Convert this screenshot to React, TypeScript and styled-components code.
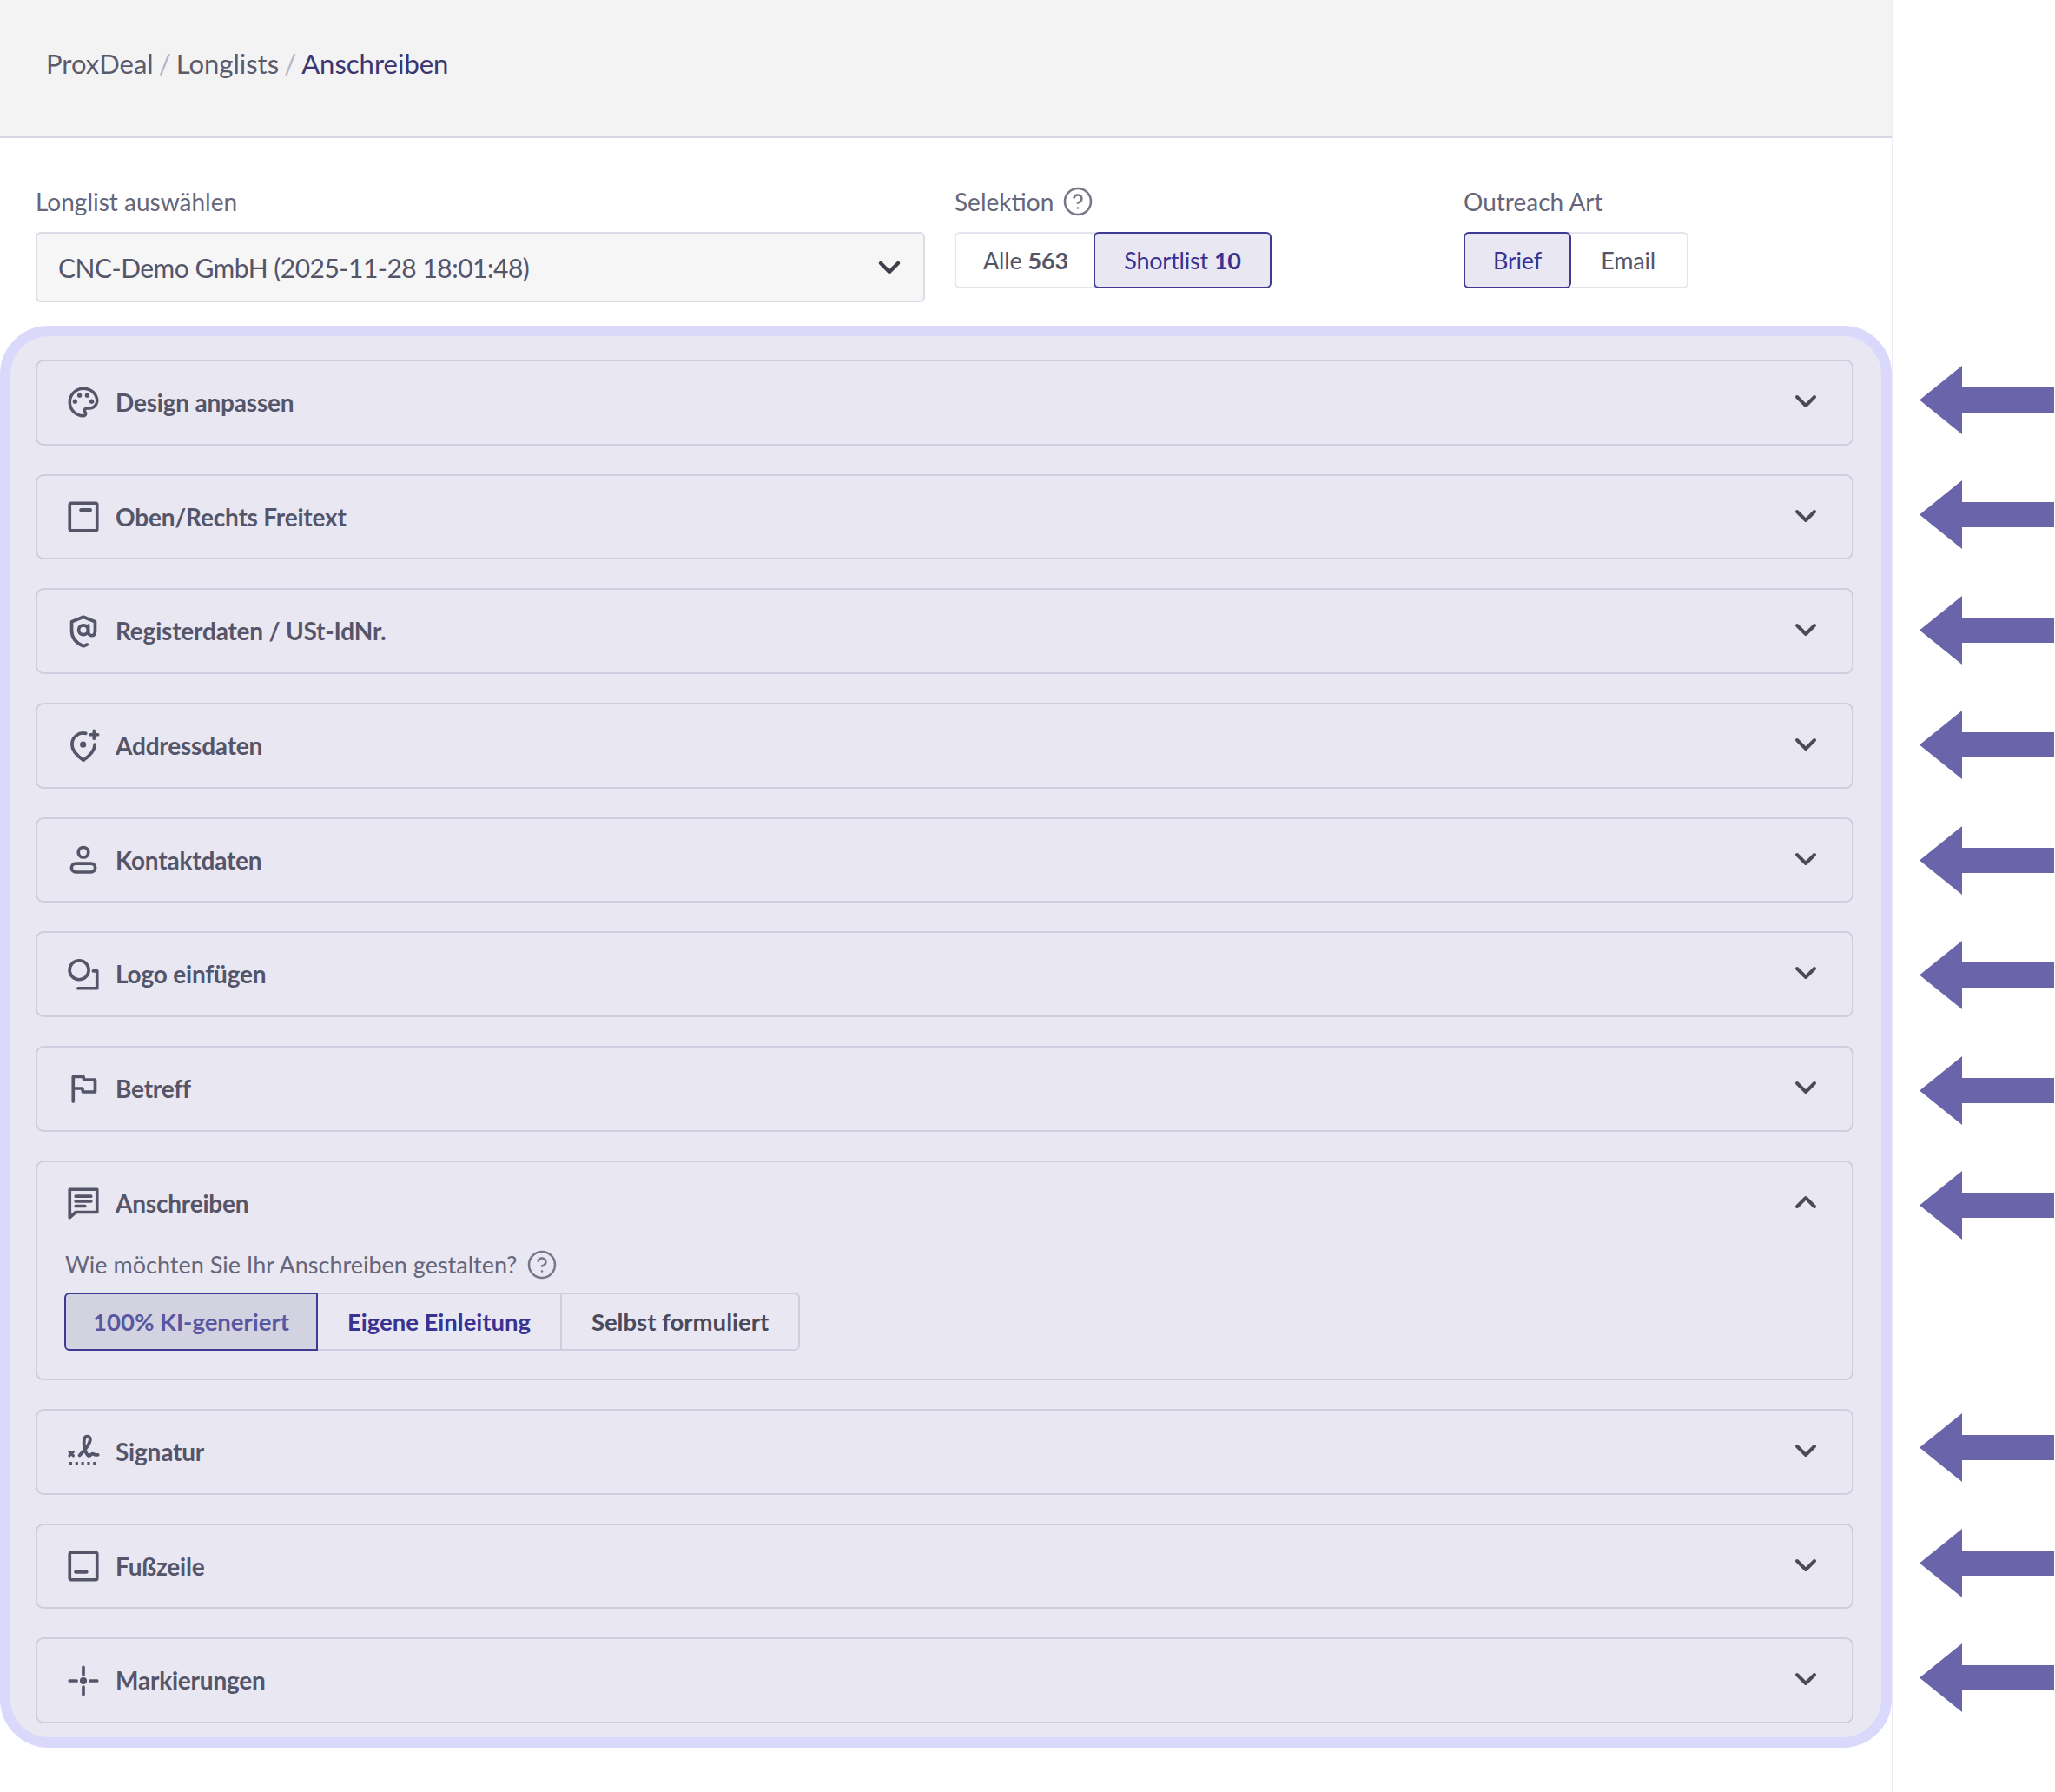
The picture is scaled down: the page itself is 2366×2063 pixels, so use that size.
import React from 'react'
import styled, { createGlobalStyle } from 'styled-components'
import { ChevronDown, ChevronUp, CircleHelp } from 'lucide-react'
import { MdOutlinePalette } from 'react-icons/md'

const GlobalStyle = createGlobalStyle`
  html, body {
    margin: 0;
    padding: 0;
    background: #fff;
  }
  body {
    font-family: 'Lato', 'Noto Sans', sans-serif;
    color: #55556a;
  }
  * {
    box-sizing: border-box;
  }
`

const Svg = ({ children }: { children: React.ReactNode }): JSX.Element => (
  <StyledSvg viewBox="0 0 24 24" fill="none" stroke="currentColor" strokeWidth="2.1" strokeLinecap="round" strokeLinejoin="round">
    {children}
  </StyledSvg>
)

const TopBoxIcon = () => (
  <Svg>
    <rect x="3" y="3" width="18" height="18" rx="1" />
    <path d="M10.5 7.5h6" strokeWidth="2.4" />
  </Svg>
)

const BottomBoxIcon = () => (
  <Svg>
    <rect x="3" y="3" width="18" height="18" rx="1" />
    <path d="M7 15.8h7" strokeWidth="2.4" />
  </Svg>
)

const ShieldAtIcon = () => (
  <Svg>
    <path d="M14.5 20.6 12 21.6C7.5 19.6 4.3 16 4.3 11.5V5.6L12 2.4l7.7 3.2v5.9" />
    <circle cx="12" cy="11" r="3.1" />
    <path d="M19.7 11.5c0 2-.9 3.2-2.3 3.2-1.2 0-2.2-1-2.2-2.4V8" />
  </Svg>
)

const PinPlusIcon = () => (
  <Svg>
    <path d="M13.6 4.2A7.4 7.4 0 0 0 4.5 11.5C4.5 15.4 8 19 12 21.8c4-2.8 7.5-6.4 7.5-10.3" />
    <circle cx="11.8" cy="11.5" r="1" fill="currentColor" />
    <path d="M19 2.5v5M16.5 5h5" />
  </Svg>
)

const PersonIcon = () => (
  <Svg>
    <circle cx="12" cy="7" r="3.3" />
    <rect x="4.2" y="14.4" width="15.6" height="5.6" rx="2.8" />
  </Svg>
)

const LogoIcon = () => (
  <Svg>
    <circle cx="9.2" cy="9" r="6.3" />
    <path d="M18.5 9.6H21V21H8.5" />
  </Svg>
)

const FlagIcon = () => (
  <Svg>
    <path d="M5.3 20.5V4.3H12l.4 2h7.3v8h-8l-.4-2.3H5.3" />
  </Svg>
)

const MessageIcon = () => (
  <Svg>
    <path d="M3 3h18v15H7l-4 3.5z" />
    <path d="M7 7.5h10M7 10.8h10M7 14h6" />
  </Svg>
)

const SignatureIcon = () => (
  <Svg>
    <path d="M2.8 12.2l2.6 2.6M5.4 12.2l-2.6 2.6" strokeWidth="1.8" />
    <path d="M9.5 14.5c3-3 7-7.5 7-10.5 0-2.5-3.5-2.5-4 0-.5 3 .5 9 2.5 10.5 1.3 1 2-1 3-1s1.5 1 3.5.7" strokeWidth="2.2" />
    <path d="M2.8 19.8h18.4" strokeDasharray="1.8 2.1" strokeLinecap="butt" strokeWidth="1.8" />
  </Svg>
)

const MarksIcon = () => (
  <Svg>
    <circle cx="12" cy="12" r="1.3" fill="currentColor" />
    <path d="M12 3v5M12 16v5M3 12h4.500M16.500 12H21" />
  </Svg>
)

function PaletteIcon(): JSX.Element {
  return <PaletteGlyph />
}

interface Section {
  title: string
  icon: JSX.Element
  open?: boolean
}

const sections: Section[] = [
  { title: 'Design anpassen', icon: <PaletteIcon /> },
  { title: 'Oben/Rechts Freitext', icon: <TopBoxIcon /> },
  { title: 'Registerdaten / USt-IdNr.', icon: <ShieldAtIcon /> },
  { title: 'Addressdaten', icon: <PinPlusIcon /> },
  { title: 'Kontaktdaten', icon: <PersonIcon /> },
  { title: 'Logo einfügen', icon: <LogoIcon /> },
  { title: 'Betreff', icon: <FlagIcon /> },
  { title: 'Anschreiben', icon: <MessageIcon />, open: true },
  { title: 'Signatur', icon: <SignatureIcon /> },
  { title: 'Fußzeile', icon: <BottomBoxIcon /> },
  { title: 'Markierungen', icon: <MarksIcon /> },
]

const App = (): JSX.Element => {
  return (
    <>
      <GlobalStyle />
      <Page>
        <Main>
          <Header>
            <Crumb>ProxDeal</Crumb>
            <Slash>/</Slash>
            <Crumb>Longlists</Crumb>
            <Slash>/</Slash>
            <Crumb $current>Anschreiben</Crumb>
          </Header>

          <Controls>
            <Field>
              <Label>Longlist auswählen</Label>
              <Select>
                CNC-Demo GmbH (2025-11-28 18:01:48)
                <ChevronDown size={40} strokeWidth={2.6} color="#3f3f4d" />
              </Select>
            </Field>
            <Field>
              <Label>
                Selektion
                <CircleHelp size={36} strokeWidth={1.7} color="#77778a" />
              </Label>
              <Segments>
                <Segment $width={160}>
                  Alle <b>563</b>
                </Segment>
                <Segment $width={205} $active>
                  Shortlist <b>10</b>
                </Segment>
              </Segments>
            </Field>
            <Field>
              <Label>Outreach Art</Label>
              <Segments>
                <Segment $width={124} $active>
                  Brief
                </Segment>
                <Segment $width={135}>Email</Segment>
              </Segments>
            </Field>
          </Controls>

          <Panel>
            {sections.map((section) => (
              <Card key={section.title}>
                <CardHeader>
                  {section.icon}
                  <CardTitle>{section.title}</CardTitle>
                  <CardChevron>
                    {section.open ? (
                      <ChevronUp size={40} strokeWidth={2.4} color="#4a4a58" />
                    ) : (
                      <ChevronDown size={40} strokeWidth={2.4} color="#4a4a58" />
                    )}
                  </CardChevron>
                </CardHeader>
                {section.open && (
                  <CardBody>
                    <Question>
                      Wie möchten Sie Ihr Anschreiben gestalten?
                      <CircleHelp size={36} strokeWidth={1.7} color="#77778a" />
                    </Question>
                    <ModeSegments>
                      <ModeButton $mode="selected" $width={292}>
                        100% KI-generiert
                      </ModeButton>
                      <ModeButton $mode="accent" $width={279}>
                        Eigene Einleitung
                      </ModeButton>
                      <ModeButton $mode="plain" $width={274}>
                        Selbst formuliert
                      </ModeButton>
                    </ModeSegments>
                  </CardBody>
                )}
              </Card>
            ))}
          </Panel>
        </Main>

        <ArrowRail>
          {sections.map((section) => (
            <Arrow key={section.title} $gap={section.title === 'Signatur' ? 200 : 53.5} viewBox="0 0 155 79">
              <polygon points="0,39.5 49,0 49,25 155,25 155,54 49,54 49,79" fill="#6a65aa" />
            </Arrow>
          ))}
        </ArrowRail>
      </Page>
    </>
  )
}

const Page = styled.div`
  display: flex;
  width: 2366px;
  height: 2063px;
  overflow: hidden;
`

const Main = styled.div`
  width: 2179px;
  flex-shrink: 0;
  border-right: 1px solid #ecebf3;
`

const Header = styled.div`
  height: 159px;
  display: flex;
  align-items: center;
  gap: 6px;
  padding-left: 53px;
  padding-bottom: 12px;
  background: #f3f3f4;
  border-bottom: 2px solid #d6d5e4;
  font-size: 31px;
`

const Crumb = styled.span<{ $current?: boolean }>`
  color: ${(props) => (props.$current ? '#3a3570' : '#5b5b6b')};
`

const Slash = styled.span`
  color: #b4b4c6;
`

const Controls = styled.div`
  display: grid;
  grid-template-columns: 1024px 552px auto;
  column-gap: 34px;
  padding: 53px 0 0 41px;
  height: 216px;
`

const Field = styled.div`
  display: flex;
  flex-direction: column;
  align-items: flex-start;
`

const Label = styled.div`
  height: 40px;
  margin-bottom: 15px;
  display: flex;
  align-items: center;
  gap: 10px;
  font-size: 28px;
  color: #66667a;
`

const Select = styled.div`
  width: 100%;
  height: 81px;
  display: flex;
  align-items: center;
  justify-content: space-between;
  padding: 0 19px 0 24px;
  background: #f6f6f7;
  border: 2px solid #dcdbe6;
  border-radius: 6px;
  font-size: 30px;
  letter-spacing: -0.5px;
  color: #55556a;
`

const Segments = styled.div`
  display: flex;
  height: 65px;
  background: #fff;
  border: 2px solid #e4e3ee;
  border-radius: 6px;
`

const Segment = styled.div<{ $active?: boolean; $width: number }>`
  display: flex;
  align-items: center;
  justify-content: center;
  gap: 7px;
  width: ${(props) => props.$width}px;
  margin: ${(props) => (props.$active ? '-2px' : '-2px 0')};
  font-size: 27px;
  letter-spacing: -0.2px;
  color: ${(props) => (props.$active ? '#3a3290' : '#55556a')};
  background: ${(props) => (props.$active ? '#e9e7f2' : 'transparent')};
  border: ${(props) => (props.$active ? '2.5px solid #3f3a91' : 'none')};
  border-radius: 6px;

  b {
    font-weight: 700;
  }
`

const Panel = styled.div`
  display: flex;
  flex-direction: column;
  gap: 33px;
  height: 1637px;
  padding: 27px 32px 15px 29px;
  background: #e9e7f2;
  border: 12px solid #dbd9fb;
  border-radius: 56px;
`

const Card = styled.div`
  border: 2px solid #cfcdde;
  border-radius: 9px;
`

const CardHeader = styled.div`
  height: 94.7px;
  display: flex;
  align-items: center;
  padding: 0 33px 0 32px;
  color: #55556a;
`

const StyledSvg = styled.svg`
  width: 42px;
  height: 42px;
  flex-shrink: 0;
  color: #55556a;
`

const PaletteGlyph = styled(MdOutlinePalette)`
  width: 42px;
  height: 42px;
  flex-shrink: 0;
  color: #55556a;
`

const CardTitle = styled.div`
  flex: 1;
  margin: 0 0 1px 16px;
  font-size: 28px;
  font-weight: 700;
  letter-spacing: -0.2px;
  color: #55556a;
`

const CardChevron = styled.span`
  display: flex;
  margin-bottom: 3px;
`

const CardBody = styled.div`
  padding: 0 0 32.5px 31px;
`

const Question = styled.div`
  height: 50px;
  margin: -2px 0 7px;
  padding-left: 1px;
  display: flex;
  align-items: center;
  gap: 11px;
  font-size: 27px;
  color: #66667a;
`

const ModeSegments = styled.div`
  display: inline-flex;
  height: 67px;
  border: 2px solid #cfcde0;
  border-radius: 6px;
`

const modeColors = {
  selected: '#5a56a0',
  accent: '#3a3290',
  plain: '#4a4a5c',
}

const ModeButton = styled.div<{ $mode: 'selected' | 'accent' | 'plain'; $width: number }>`
  display: flex;
  align-items: center;
  justify-content: center;
  width: ${(props) => props.$width}px;
  margin: ${(props) => (props.$mode === 'selected' ? '-2px 0 -2px -2px' : '0')};
  font-size: 27.5px;
  font-weight: 700;
  color: ${(props) => modeColors[props.$mode]};
  background: ${(props) => (props.$mode === 'selected' ? '#d3d2e0' : 'transparent')};
  border: ${(props) => (props.$mode === 'selected' ? '2.5px solid #3f3a91' : 'none')};
  border-left: ${(props) => (props.$mode === 'plain' ? '2px solid #cfcde0' : '')};
  border-radius: ${(props) => (props.$mode === 'selected' ? '6px 0 0 6px' : '0')};
`

const ArrowRail = styled.div`
  flex: 1;
  display: flex;
  flex-direction: column;
  align-items: flex-start;
  padding-top: 367px;
  padding-left: 31px;
`

const Arrow = styled.svg<{ $gap: number }>`
  width: 155px;
  height: 79px;
  flex-shrink: 0;
  margin-top: ${(props) => props.$gap}px;
`

export default App
